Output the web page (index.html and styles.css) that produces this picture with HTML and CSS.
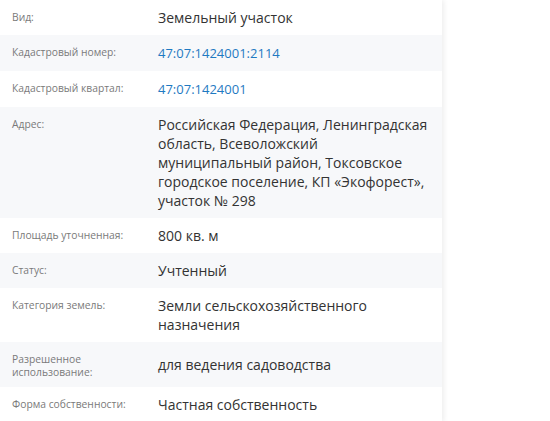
FILE: index.html
```html
<!DOCTYPE html>
<html lang="ru">
<head>
    <meta charset="UTF-8">
    <meta name="viewport" content="width=device-width, initial-scale=1.0">
    <title>Земельный участок</title>
    <link rel="stylesheet" href="styles.css">
</head>
<body>
    <div class="info-panel">
        <table class="info-table">
            <tbody>
                <tr>
                    <td class="label">Вид:</td>
                    <td class="value">Земельный участок</td>
                </tr>
                <tr>
                    <td class="label">Кадастровый номер:</td>
                    <td class="value"><a class="link" href="#">47:07:1424001:2114</a></td>
                </tr>
                <tr>
                    <td class="label">Кадастровый квартал:</td>
                    <td class="value"><a class="link" href="#">47:07:1424001</a></td>
                </tr>
                <tr>
                    <td class="label">Адрес:</td>
                    <td class="value">Российская Федерация, Ленинградская область, Всеволожский муниципальный район, Токсовское городское поселение, КП «Экофорест», участок № 298</td>
                </tr>
                <tr>
                    <td class="label">Площадь уточненная:</td>
                    <td class="value">800 кв. м</td>
                </tr>
                <tr>
                    <td class="label">Статус:</td>
                    <td class="value">Учтенный</td>
                </tr>
                <tr>
                    <td class="label">Категория земель:</td>
                    <td class="value">Земли сельскохозяйственного назначения</td>
                </tr>
                <tr>
                    <td class="label">Разрешенное использование:</td>
                    <td class="value">для ведения садоводства</td>
                </tr>
                <tr>
                    <td class="label">Форма собственности:</td>
                    <td class="value">Частная собственность</td>
                </tr>
            </tbody>
        </table>
    </div>
</body>
</html>
```

FILE: styles.css
```css
body {
    margin: 0;
    background: #fff;
    font-family: "Open Sans", "Noto Sans", sans-serif;
}

.info-panel {
    width: 442px;
    background: #fff;
    box-shadow: 2px 0 5px rgba(0,0,0,0.07);
}

.info-table {
    width: 100%;
    border-collapse: collapse;
}

.info-table tr:nth-child(even) {
    background-color: #f7f8fa;
}

.info-table td {
    padding: 8px 0;
}

.label {
    width: 134px;
    padding-left: 12px !important;
    padding-right: 12px !important;
    vertical-align: top;
    font-size: 10.3px;
    line-height: 13px;
    color: #7a7a7a;
}

.label::before {
    content: "";
    display: block;
    height: 3px;
}

.value {
    padding-right: 12px !important;
    vertical-align: middle;
    font-size: 14px;
    line-height: 19px;
    color: #333;
}

.link {
    color: #1f7ac2;
    text-decoration: none;
    font-size: 13px;
}
```
